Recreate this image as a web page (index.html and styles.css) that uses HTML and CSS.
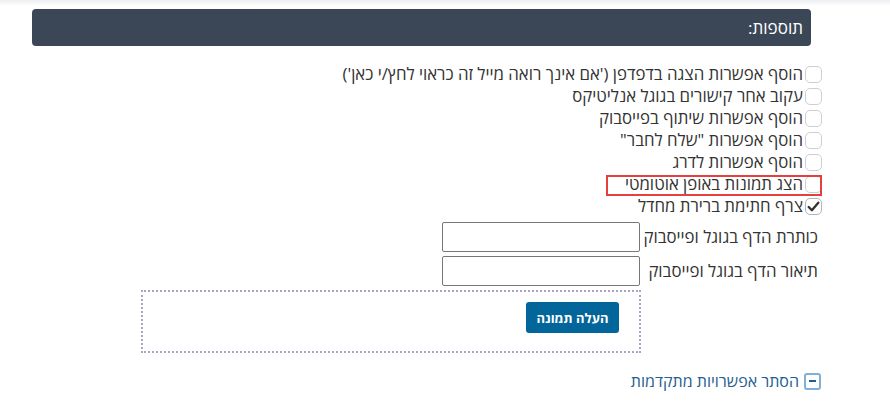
FILE: index.html
```html
<!DOCTYPE html>
<html lang="he" dir="rtl">
  <head>
    <meta charset="UTF-8" />
    <title>תוספות</title>
    <link rel="stylesheet" href="styles.css">
  </head>
  <body>
    <div class="topshade"></div>

    <div class="section-head">תוספות:</div>

    <div class="options">
      <label class="opt"><span class="box"></span>הוסף אפשרות הצגה בדפדפן ('אם אינך רואה מייל זה כראוי לחץ/י כאן')</label>
      <label class="opt"><span class="box"></span>עקוב אחר קישורים בגוגל אנליטיקס</label>
      <label class="opt"><span class="box"></span>הוסף אפשרות שיתוף בפייסבוק</label>
      <label class="opt"><span class="box"></span>הוסף אפשרות "שלח לחבר"</label>
      <label class="opt"><span class="box"></span>הוסף אפשרות לדרג</label>
      <label class="opt marked"><span class="box"></span>הצג תמונות באופן אוטומטי<span class="mark"></span></label>
      <label class="opt"><span class="box checked"><svg width="15" height="15" viewBox="0 0 14 14"><path d="M2.5 7.5 L5.5 10.5 L11.5 3.5" fill="none" stroke="#333" stroke-width="2.2" stroke-linecap="round" stroke-linejoin="round"/></svg></span>צרף חתימת ברירת מחדל</label>
    </div>

    <div class="fields">
      <label class="field-label">כותרת הדף בגוגל ופייסבוק</label>
      <input class="field" type="text">
      <label class="field-label">תיאור הדף בגוגל ופייסבוק</label>
      <input class="field" type="text">
    </div>

    <div class="upload">
      <button class="upload-btn">העלה תמונה</button>
    </div>

    <a class="toggle" href="#"><span class="minus"><span></span></span>הסתר אפשרויות מתקדמות</a>
  </body>
</html>
```

FILE: styles.css
```css
body {
  margin: 0;
  font-family: "Open Sans", "DejaVu Sans", sans-serif;
  font-size: 16.8px;
  color: #333;
  background: #fff;
}

.topshade {
  height: 6px;
  background: linear-gradient(#eceef1, #fff);
}

.section-head {
  margin: 3px 79px 0 32px;
  height: 37px;
  line-height: 37px;
  padding-right: 8px;
  background: #3b4757;
  color: #fff;
  border-radius: 4px;
  font-size: 17px;
}

.options {
  margin: 17px 68px 0 0;
}

.opt {
  display: flex;
  align-items: center;
  height: 22px;
  line-height: 22px;
  position: relative;
}

.box {
  width: 15px;
  height: 15px;
  border: 1px solid #cfcfcf;
  border-radius: 5px;
  background: #fff;
  margin-left: 2px;
  display: flex;
  align-items: center;
  justify-content: center;
  flex-shrink: 0;
}

.box.checked {
  border-color: #b5b5b5;
}

.mark {
  position: absolute;
  right: 0;
  top: 2px;
  width: 212px;
  height: 17px;
  border: 2px solid #e5403f;
}

.fields {
  display: grid;
  grid-template-columns: 176px 198px;
  row-gap: 4px;
  column-gap: 2px;
  margin: 5px 72px 0 0;
  align-items: center;
}

.field-label {
  line-height: 30px;
  white-space: nowrap;
}

.field {
  height: 30px;
  box-sizing: border-box;
  border: 1px solid #777;
  border-radius: 2px;
  margin: 0;
}

.upload {
  width: 496px;
  height: 59px;
  margin: 4px 249px 0 0;
  border: 2px dotted #a9a3c4;
  box-sizing: content-box;
}

.upload-btn {
  margin: 10px 20px 0 0;
  width: 93px;
  height: 31px;
  background: #03669b;
  color: #fff;
  border: none;
  border-radius: 3px;
  font-family: "Open Sans", "DejaVu Sans", sans-serif;
  font-weight: bold;
  font-size: 13px;
}

.toggle {
  display: flex;
  align-items: center;
  margin: 17px 69px 0 0;
  color: #245d8f;
  text-decoration: none;
  line-height: 22px;
  font-size: 16px;
}

.minus {
  width: 13px;
  height: 13px;
  border: 2px solid #7fb0d9;
  border-radius: 3px;
  margin-left: 5px;
  display: flex;
  align-items: center;
  justify-content: center;
  flex-shrink: 0;
}

.minus span {
  width: 7px;
  height: 2px;
  background: #245d8f;
}
```
